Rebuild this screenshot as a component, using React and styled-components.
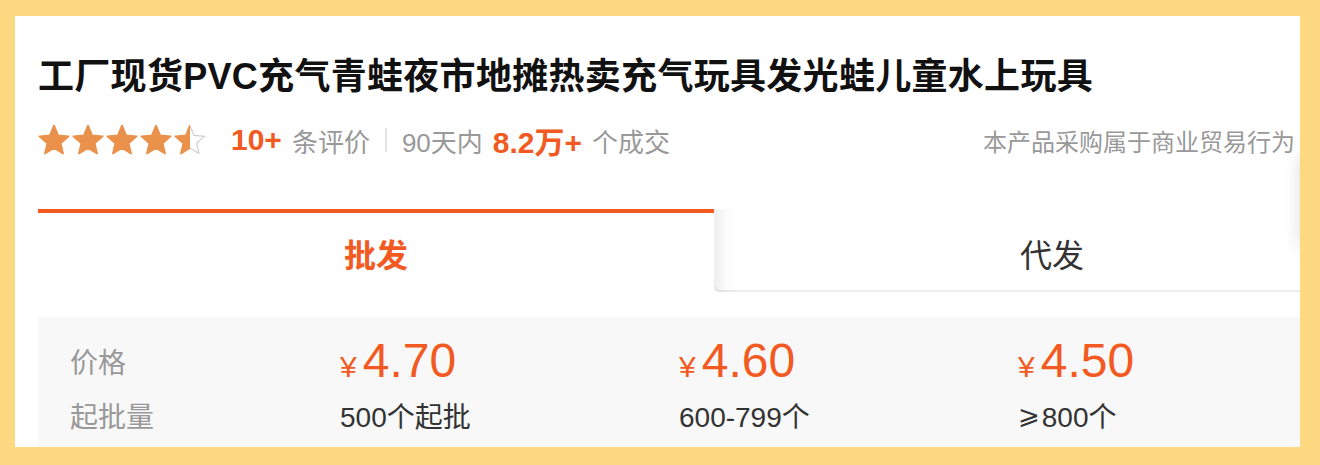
import React from "react";
import styled, { createGlobalStyle } from "styled-components";

const ORANGE = "#F25A22";
const STAR = "#EA924B";

const Global = createGlobalStyle`
  html, body { margin: 0; padding: 0; background: #FDD982; }
  body { font-family: "Liberation Sans", "Noto Sans CJK SC", sans-serif; }
  * { box-sizing: border-box; }
`;

const Frame = styled.div`
  width: 1320px;
  height: 465px;
  padding: 16px 20px 18px 15px;
  display: flex;
  overflow: hidden;
`;

const Panel = styled.div`
  position: relative;
  flex: 1;
  background: #fff;
  overflow: hidden;
  padding: 36px 0 0 23px;
  display: flex;
  flex-direction: column;
`;

const Title = styled.h1`
  margin: 0;
  font-size: 36px;
  line-height: 50px;
  font-weight: 700;
  letter-spacing: 0.3px;
  color: #111;
  white-space: nowrap;
`;

const MetaRow = styled.div`
  margin: 18px 5px 0 0;
  height: 40px;
  display: flex;
  align-items: center;
  justify-content: space-between;
`;

const Left = styled.div`
  display: flex;
  align-items: center;
`;

const Stars = styled.div`
  display: flex;
  gap: 2px;
`;

const Stats = styled.div`
  margin-left: 25px;
  font-size: 26px;
  color: #999;
  white-space: nowrap;
  display: flex;
  align-items: center;
`;

const Num = styled.span`
  color: ${ORANGE};
  font-weight: 700;
  font-size: 30px;
  margin-right: ${(p) => p.$gap || 10}px;
  margin-left: ${(p) => p.$lead || 0}px;
`;

const Sep = styled.span`
  display: inline-block;
  width: 2px;
  height: 24px;
  background: #e2e2e2;
  margin: 0 15px;
`;

const Note = styled.div`
  font-size: 24px;
  color: #999;
  white-space: nowrap;
`;

const Tabs = styled.div`
  margin-top: 49px;
  width: 1352px;
  flex-shrink: 0;
  display: flex;
`;

const Tab = styled.div`
  width: 676px;
  height: 83px;
  display: flex;
  align-items: center;
  justify-content: center;
  font-size: 32px;
  background: #fff;
  ${(p) =>
    p.$active
      ? `
    border-top: 4px solid ${ORANGE};
    color: ${ORANGE};
    font-weight: 700;
  `
      : `
    color: #333;
    padding-top: 4px;
    border-bottom-left-radius: 6px;
    box-shadow: inset 22px 0 18px -18px rgba(0,0,0,0.10), inset 0 -2px 0 #ececec;
  `}
`;

const Table = styled.div`
  margin-top: 25px;
  width: 1352px;
  flex-shrink: 0;
  flex: 1;
  background: #f8f8f8;
  padding: 20px 0 0 32px;
  display: grid;
  grid-template-columns: 270px 339px 339px 339px;
  grid-template-rows: 48px 36px;
  row-gap: 12px;
  align-content: start;
`;

const Label = styled.div`
  font-size: 28px;
  color: #999;
  display: flex;
  align-items: center;
`;

const Price = styled.div`
  display: flex;
  align-items: baseline;
  color: ${ORANGE};
  line-height: 48px;
`;

const Yen = styled.span`
  font-size: 30px;
  margin-right: 6px;
`;

const Amount = styled.span`
  font-size: 48px;
`;

const Qty = styled.div`
  font-size: 28px;
  color: #333;
  display: flex;
  align-items: center;
`;

const Ge = styled.span`
  font-family: "DejaVu Sans", sans-serif;
  font-size: 26px;
  margin-right: 2px;
`;

const SideShadow = styled.div`
  position: absolute;
  left: 100%;
  top: 140px;
  width: 40px;
  height: 90px;
  background: #fff;
  box-shadow: 0 0 18px rgba(0, 0, 0, 0.14);
`;

const STAR_PATH =
  "M12 1.3L15.06 8.59L22.94 9.25L16.95 14.41L18.76 22.1L12 18L5.24 22.1L7.05 14.41L1.06 9.25L8.94 8.59Z";

function StarIcon({ half }) {
  if (!half) {
    return (
      <svg width="32" height="32" viewBox="0 0 24 24">
        <path d={STAR_PATH} fill={STAR} stroke={STAR} strokeWidth="1.4" strokeLinejoin="round" />
      </svg>
    );
  }
  return (
    <svg width="32" height="32" viewBox="0 0 24 24">
      <defs>
        <clipPath id="halfL">
          <rect x="0" y="0" width="12" height="24" />
        </clipPath>
        <clipPath id="halfR">
          <rect x="12" y="0" width="12" height="24" />
        </clipPath>
      </defs>
      <path d={STAR_PATH} fill="none" stroke="#cfcfcf" strokeWidth="0.9" strokeLinejoin="round" clipPath="url(#halfR)" />
      <path d={STAR_PATH} fill={STAR} stroke={STAR} strokeWidth="1.4" strokeLinejoin="round" clipPath="url(#halfL)" />
    </svg>
  );
}

const tiers = [
  { price: "4.70", qty: "500个起批" },
  { price: "4.60", qty: "600-799个" },
  { price: "4.50", qty: "800个", ge: true },
];

export default function App() {
  return (
    <>
      <Global />
      <Frame>
        <Panel>
          <Title>工厂现货PVC充气青蛙夜市地摊热卖充气玩具发光蛙儿童水上玩具</Title>
          <MetaRow>
            <Left>
              <Stars>
                <StarIcon />
                <StarIcon />
                <StarIcon />
                <StarIcon />
                <StarIcon half />
              </Stars>
              <Stats>
                <Num>10+</Num>
                条评价
                <Sep />
                90天内
                <Num $lead={10}>8.2万+</Num>
                个成交
              </Stats>
            </Left>
            <Note>本产品采购属于商业贸易行为</Note>
          </MetaRow>
          <Tabs>
            <Tab $active>批发</Tab>
            <Tab>代发</Tab>
          </Tabs>
          <Table>
            <Label>价格</Label>
            {tiers.map((t) => (
              <Price key={t.price}>
                <Yen>¥</Yen>
                <Amount>{t.price}</Amount>
              </Price>
            ))}
            <Label>起批量</Label>
            {tiers.map((t) => (
              <Qty key={t.qty}>
                {t.ge && <Ge>⩾</Ge>}
                {t.qty}
              </Qty>
            ))}
          </Table>
          <SideShadow />
        </Panel>
      </Frame>
    </>
  );
}
